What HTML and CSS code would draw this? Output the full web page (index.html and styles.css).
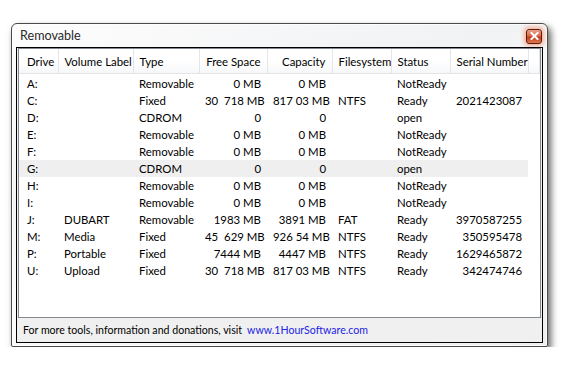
FILE: index.html
```html
<!DOCTYPE html>
<html lang="en">
<head>
    <meta charset="UTF-8">
    <title>Removable</title>
    <link rel="stylesheet" href="styles.css">
</head>
<body>
    <div class="window">
        <div class="titlebar">
            <span class="title">Removable</span>
            <div class="close">
                <svg width="9" height="8" viewBox="0 0 9 8"><path d="M1.5 1 L7.5 7 M7.5 1 L1.5 7" stroke="#fff" stroke-width="2" stroke-linecap="square"/></svg>
            </div>
        </div>
        <div class="client">
            <div class="list">
                <table class="drives">
                    <colgroup>
                        <col class="c-drive"><col class="c-label"><col class="c-type"><col class="c-free"><col class="c-cap"><col class="c-fs"><col class="c-status"><col class="c-serial"><col>
                    </colgroup>
                    <thead>
                        <tr>
                            <th>Drive</th>
                            <th>Volume Label</th>
                            <th>Type</th>
                            <th class="num">Free Space</th>
                            <th class="num">Capacity</th>
                            <th>Filesystem</th>
                            <th>Status</th>
                            <th class="num">Serial Number</th>
                            <th class="filler"></th>
                        </tr>
                    </thead>
                    <tbody>
                        <tr><td>A:</td><td></td><td>Removable</td><td class="num">0 MB</td><td class="num">0 MB</td><td></td><td>NotReady</td><td class="num"></td><td></td></tr>
                        <tr><td>C:</td><td></td><td>Fixed</td><td class="num">30  718 MB</td><td class="num">817 03 MB</td><td>NTFS</td><td>Ready</td><td class="num">2021423087</td><td></td></tr>
                        <tr><td>D:</td><td></td><td>CDROM</td><td class="num">0</td><td class="num">0</td><td></td><td>open</td><td class="num"></td><td></td></tr>
                        <tr><td>E:</td><td></td><td>Removable</td><td class="num">0 MB</td><td class="num">0 MB</td><td></td><td>NotReady</td><td class="num"></td><td></td></tr>
                        <tr><td>F:</td><td></td><td>Removable</td><td class="num">0 MB</td><td class="num">0 MB</td><td></td><td>NotReady</td><td class="num"></td><td></td></tr>
                        <tr class="hover"><td>G:</td><td></td><td>CDROM</td><td class="num">0</td><td class="num">0</td><td></td><td>open</td><td class="num"></td><td class="filler"></td></tr>
                        <tr><td>H:</td><td></td><td>Removable</td><td class="num">0 MB</td><td class="num">0 MB</td><td></td><td>NotReady</td><td class="num"></td><td></td></tr>
                        <tr><td>I:</td><td></td><td>Removable</td><td class="num">0 MB</td><td class="num">0 MB</td><td></td><td>NotReady</td><td class="num"></td><td></td></tr>
                        <tr><td>J:</td><td>DUBART</td><td>Removable</td><td class="num">1983 MB</td><td class="num">3891 MB</td><td>FAT</td><td>Ready</td><td class="num">3970587255</td><td></td></tr>
                        <tr><td>M:</td><td>Media</td><td>Fixed</td><td class="num">45  629 MB</td><td class="num">926 54 MB</td><td>NTFS</td><td>Ready</td><td class="num">350595478</td><td></td></tr>
                        <tr><td>P:</td><td>Portable</td><td>Fixed</td><td class="num">7444 MB</td><td class="num">4447 MB</td><td>NTFS</td><td>Ready</td><td class="num">1629465872</td><td></td></tr>
                        <tr><td>U:</td><td>Upload</td><td>Fixed</td><td class="num">30  718 MB</td><td class="num">817 03 MB</td><td>NTFS</td><td>Ready</td><td class="num">342474746</td><td></td></tr>
                    </tbody>
                </table>
            </div>
            <div class="footer">
                <span>For more tools, information and donations, visit</span>
                <a class="link" href="#">www.1HourSoftware.com</a>
            </div>
        </div>
    </div>
</body>
</html>
```

FILE: styles.css
```css
body {
    margin: 0;
    background: #fff;
    font-family: Lato, "Liberation Sans", sans-serif;
    font-size: 11.4px;
    color: #000;
}
.window {
    box-sizing: border-box;
    width: 537px;
    height: 324px;
    margin: 23px 0 0 11px;
    padding: 0 4px 3px;
    border: 1px solid #4a4a4a;
    border-radius: 6px 6px 2px 2px;
    background: linear-gradient(160deg, #fdfdfd 0%, #f1f2f4 35%, #fbfbfc 55%, #eceef1 100%);
    box-shadow: 3px 4px 7px rgba(0,0,0,0.6), inset 0 0 0 1px rgba(255,255,255,0.8);
    display: flex;
    flex-direction: column;
}
.titlebar {
    height: 23px;
    display: flex;
    align-items: center;
    justify-content: space-between;
    padding-left: 4px;
}
.title {
    color: #2a2a2a;
    font-size: 12.6px;
    margin-top: -1px;
}
.close {
    box-sizing: border-box;
    width: 16px;
    height: 15px;
    margin: 1px 1px 0 0;
    border: 1px solid #5e1a0f;
    border-radius: 3px;
    background: linear-gradient(#eaa48c 0%, #d86a4c 45%, #c23c1c 55%, #e07a4c 100%);
    box-shadow: 0 0 4px 2px rgba(245,120,70,0.55);
    display: flex;
    align-items: center;
    justify-content: center;
}
.client {
    flex: 1;
    display: flex;
    flex-direction: column;
    border: 1px solid #000;
    padding: 0 1px;
    background: #f0f0f0;
    min-height: 0;
}
.list {
    flex: 1;
    background: #fff;
    border: 1px solid #828790;
    overflow: hidden;
}
.drives {
    border-collapse: collapse;
    table-layout: fixed;
    width: 100%;
}
.c-drive { width: 39px; }
.c-label { width: 75px; }
.c-type { width: 66px; }
.c-free { width: 68px; }
.c-cap { width: 65px; }
.c-fs { width: 59px; }
.c-status { width: 59px; }
.c-serial { width: 78px; }

.drives th {
    height: 24px;
    padding: 0 4px 0 6px;
    font-weight: normal;
    text-align: left;
    background: linear-gradient(#fff 0%, #fff 50%, #f6f7f9 100%);
    border-right: 1px solid #e3e5e8;
    border-bottom: 1px solid #e3e5e8;
    white-space: nowrap;
    overflow: hidden;
}
.drives th:first-child,
.drives td:first-child {
    padding-left: 8px;
}
.drives td {
    height: 17px;
    padding: 0 4px 0 6px;
    white-space: pre;
    overflow: hidden;
}
.drives .num {
    text-align: right;
    padding-right: 6px;
}
.drives tbody tr:first-child td {
    padding-top: 1px;
}
.drives tr.hover td {
    background: #efefef;
}
.drives tr.hover td.filler {
    background: #fff;
}
.footer {
    height: 24px;
    display: flex;
    align-items: center;
    gap: 5px;
    padding-left: 5px;
    font-size: 10.6px;
}
.link {
    color: #2323e6;
    text-decoration: none;
}
```
